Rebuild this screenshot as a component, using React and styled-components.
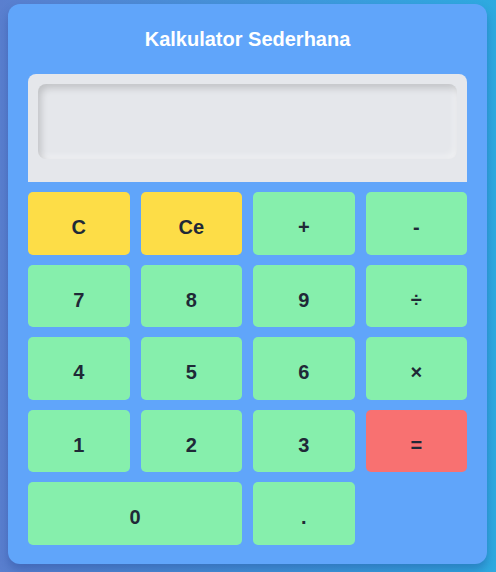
import React, { useState } from "react";
import styled, { createGlobalStyle } from "styled-components";

const GlobalStyle = createGlobalStyle`
  html, body {
    margin: 0;
    padding: 0;
  }
  body {
    font-family: "Liberation Sans", Arial, sans-serif;
    background: linear-gradient(90deg, #5a7fcf 0%, #3f98dc 60%, #2eaae0 100%);
    min-height: 572px;
  }
`;

const Page = styled.div`
  padding: 4px 9px 8px 8px;
  box-sizing: border-box;
  min-height: 572px;
`;

const Card = styled.div`
  background: #60a5fa;
  border-radius: 12px;
  padding: 20px 20px 19px;
  box-shadow: 0 6px 10px rgba(30, 60, 140, 0.35);
`;

const Title = styled.h1`
  margin: 1px 0 21px;
  text-align: center;
  color: #ffffff;
  font-size: 20px;
  font-weight: 700;
  line-height: 28px;
`;

const Display = styled.div`
  background: #e5e7eb;
  border-radius: 8px 8px 0 0;
  padding: 10px 10px 23px;
`;

const Screen = styled.input`
  display: block;
  width: 100%;
  box-sizing: border-box;
  height: 75px;
  border: none;
  outline: none;
  border-radius: 8px;
  background: #e5e7eb;
  box-shadow: inset 3px 4px 7px rgba(0, 0, 0, 0.16),
    inset -3px -3px 6px rgba(255, 255, 255, 0.45);
  font-family: "Liberation Sans", Arial, sans-serif;
  font-size: 28px;
  text-align: right;
  padding: 0 14px;
  color: #1f2937;
`;

const Keys = styled.div`
  display: grid;
  grid-template-columns: repeat(4, 1fr);
  grid-auto-rows: 62.5px;
  column-gap: 11px;
  row-gap: 10px;
  margin-top: 10px;
`;

const colors = {
  yellow: "#fddd47",
  green: "#86efac",
  red: "#f87171",
};

const Key = styled.button`
  grid-column: span ${(p) => p.$span || 1};
  border: none;
  border-radius: 5px;
  background: ${(p) => colors[p.$tone]};
  color: #1f2937;
  font-family: "Liberation Sans", Arial, sans-serif;
  font-size: 20px;
  font-weight: 700;
  cursor: pointer;
  padding: 9px 0 0;
`;

const keys = [
  { label: "C", tone: "yellow" },
  { label: "Ce", tone: "yellow" },
  { label: "+", tone: "green" },
  { label: "-", tone: "green" },
  { label: "7", tone: "green" },
  { label: "8", tone: "green" },
  { label: "9", tone: "green" },
  { label: "÷", tone: "green" },
  { label: "4", tone: "green" },
  { label: "5", tone: "green" },
  { label: "6", tone: "green" },
  { label: "×", tone: "green" },
  { label: "1", tone: "green" },
  { label: "2", tone: "green" },
  { label: "3", tone: "green" },
  { label: "=", tone: "red" },
  { label: "0", tone: "green", span: 2 },
  { label: ".", tone: "green" },
];

const App = () => {
  const [value, setValue] = useState("");

  const press = (k) => {
    if (k === "C") return setValue("");
    if (k === "Ce") return setValue((v) => v.slice(0, -1));
    if (k === "=") {
      try {
        const expr = value.replace(/÷/g, "/").replace(/×/g, "*");
        // eslint-disable-next-line no-new-func
        setValue(String(Function(`return (${expr})`)()));
      } catch (e) {
        setValue("Error");
      }
      return;
    }
    setValue((v) => v + k);
  };

  return (
    <>
      <GlobalStyle />
      <Page>
        <Card>
          <Title>Kalkulator Sederhana</Title>
          <Display>
            <Screen value={value} readOnly />
          </Display>
          <Keys>
            {keys.map((k) => (
              <Key
                key={k.label}
                $tone={k.tone}
                $span={k.span}
                onClick={() => press(k.label)}
              >
                {k.label}
              </Key>
            ))}
          </Keys>
        </Card>
      </Page>
    </>
  );
};

export default App;
